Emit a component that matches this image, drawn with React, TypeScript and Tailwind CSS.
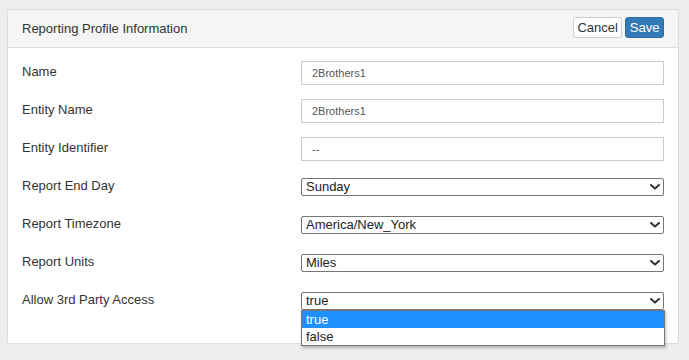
import React from 'react';

type Field =
    | { kind: 'text'; label: string; value: string }
    | { kind: 'select'; label: string; value: string; options: string[] };

const fields: Field[] = [
    { kind: 'text', label: 'Name', value: '2Brothers1' },
    { kind: 'text', label: 'Entity Name', value: '2Brothers1' },
    { kind: 'text', label: 'Entity Identifier', value: '--' },
    { kind: 'select', label: 'Report End Day', value: 'Sunday', options: ['Sunday', 'Monday', 'Tuesday', 'Wednesday', 'Thursday', 'Friday', 'Saturday'] },
    { kind: 'select', label: 'Report Timezone', value: 'America/New_York', options: ['America/New_York', 'America/Chicago', 'America/Denver', 'America/Los_Angeles'] },
    { kind: 'select', label: 'Report Units', value: 'Miles', options: ['Miles', 'Kilometers'] },
    { kind: 'select', label: 'Allow 3rd Party Access', value: 'true', options: ['true', 'false'] },
];

const Chevron = () => (
    <svg
        className="pointer-events-none absolute right-[4px] top-1/2 -translate-y-1/2"
        width="10"
        height="6"
        viewBox="0 0 10 6"
        fill="none"
    >
        <path d="M1 1l4 3.6L9 1" stroke="#333" strokeWidth="2" strokeLinecap="round" strokeLinejoin="round" />
    </svg>
);

const SelectBox: React.FC<{ value: string; options: string[]; open?: boolean }> = ({ value, options, open }) => (
    <div className="relative w-full">
        <select
            defaultValue={value}
            className="block h-[18px] w-full appearance-none rounded-[2px] border border-[#767676] bg-white pl-[4px] pr-[20px] text-[13px] leading-[16px] text-[#222] outline-none"
        >
            {options.map((o) => (
                <option key={o} value={o}>
                    {o}
                </option>
            ))}
        </select>
        <Chevron />
        {open && (
            <ul className="absolute left-0 right-[-1px] top-[18px] z-10 border border-[#767676] bg-white text-[13px] leading-[17px] text-[#222] shadow-[1px_2px_3px_rgba(0,0,0,0.25)]">
                {options.map((o) => (
                    <li key={o} className={o === value ? 'bg-[#1e90ff] pl-[4px] text-white' : 'pl-[4px]'}>
                        {o}
                    </li>
                ))}
            </ul>
        )}
    </div>
);

export default function App() {
    return (
        <div
            className="min-h-[360px] bg-[#eeeeee] pl-[7px] pt-[9px] pr-[10px]"
            style={{ fontFamily: '"Liberation Sans", Arial, sans-serif' }}
        >
            <div className="w-[672px] rounded-[2px] border border-[#dddddd] bg-white">
                <div className="flex h-[38px] items-center justify-between border-b border-[#dddddd] bg-[#f5f5f5] pl-[14px] pr-[14px]">
                    <h3 className="text-[13px] leading-[18px] text-[#333]">Reporting Profile Information</h3>
                    <div className="-mt-[2px] flex gap-[3px]">
                        <button className="h-[21px] rounded-[3px] border border-[#cccccc] bg-white px-[3.5px] text-[13px] leading-[19px] text-[#333]">
                            Cancel
                        </button>
                        <button className="h-[21px] rounded-[3px] border border-[#2e6da4] bg-[#337ab7] px-[3.5px] text-[13px] leading-[19px] text-white">
                            Save
                        </button>
                    </div>
                </div>
                <div className="flex flex-col gap-[14px] px-[14px] pt-[13px] pb-[30px]">
                    {fields.map((f, i) => (
                        <div key={f.label} className="flex h-[24px] items-start">
                            <label className="w-[279px] shrink-0 pt-[2px] text-[13px] leading-[18px] text-[#333]">{f.label}</label>
                            <div className="flex h-[24px] flex-1 items-center">
                                {f.kind === 'text' ? (
                                    <input
                                        type="text"
                                        defaultValue={f.value}
                                        className="h-[24px] w-full border border-[#cccccc] bg-white px-[10px] text-[11px] text-[#555] outline-none"
                                    />
                                ) : (
                                    <SelectBox value={f.value} options={f.options} open={i === fields.length - 1} />
                                )}
                            </div>
                        </div>
                    ))}
                </div>
            </div>
        </div>
    );
}
